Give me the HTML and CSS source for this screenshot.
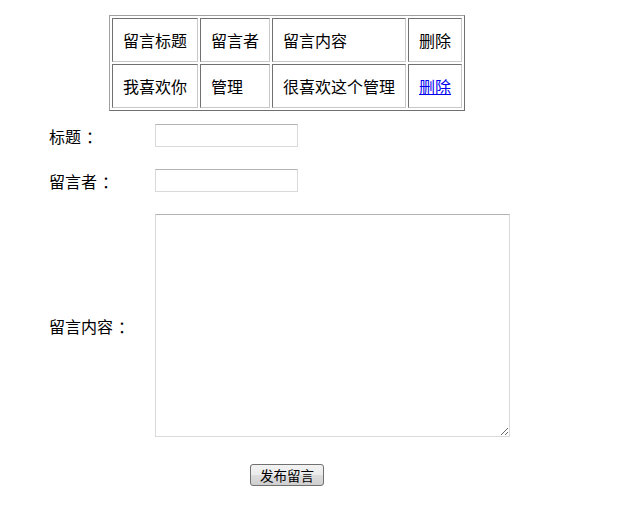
FILE: index.html
```
<!DOCTYPE html>
<html lang="zh-CN">
<head>
    <meta charset="UTF-8">
    <title>留言板</title>
    <link rel="stylesheet" href="styles.css">
</head>
<body>

<div class="board">
    <table class="msg-table">
        <tr>
            <td>留言标题</td>
            <td>留言者</td>
            <td>留言内容</td>
            <td>删除</td>
        </tr>
        <tr>
            <td>我喜欢你</td>
            <td>管理</td>
            <td>很喜欢这个管理</td>
            <td><a href="#">删除</a></td>
        </tr>
    </table>

    <form class="msg-form">
        <label class="field-label">标题<span class="colon">：</span></label>
        <input class="text-input" type="text">

        <label class="field-label">留言者<span class="colon">：</span></label>
        <input class="text-input" type="text">

        <label class="field-label">留言内容<span class="colon">：</span></label>
        <textarea class="text-area"></textarea>

        <div class="form-actions">
            <button class="submit-btn" type="button">发布留言</button>
        </div>
    </form>
</div>

</body>
</html>
```

FILE: styles.css
```
* {
    box-sizing: border-box;
}

body {
    margin: 0;
    background: #fff;
    color: #000;
    font-family: "Noto Sans CJK SC", "Microsoft YaHei", sans-serif;
    font-size: 16px;
}

.board {
    width: 476px;
    margin-left: 49px;
    padding-top: 15px;
}

.msg-table {
    margin: 0 auto;
    border-collapse: separate;
    border-spacing: 2px;
    border: 1px solid;
    border-color: #a0a0a0 #707070 #707070 #a0a0a0;
}

.msg-table td {
    padding: 10px;
    line-height: 22px;
    white-space: nowrap;
    border: 1px solid;
    border-color: #707070 #c8c8c8 #c8c8c8 #707070;
}

.msg-table a {
    color: #0000ee;
}

.msg-form {
    display: grid;
    grid-template-columns: 106px auto;
    align-items: center;
    row-gap: 22px;
    margin-top: 13px;
}

.field-label {
    line-height: 22px;
}

/* the SC colon hugs the left of its box; push it toward the middle */
.colon {
    padding-left: 5px;
}

.text-input {
    width: 143px;
    height: 23px;
    margin: 0;
    border: 1px solid #d9d9d9;
    border-top-color: #b4b4b4;
    font: inherit;
}

.text-area {
    width: 355px;
    height: 223px;
    margin: 0;
    border: 1px solid #d9d9d9;
    border-top-color: #b4b4b4;
    font: inherit;
    resize: both;
}

.form-actions {
    grid-column: 1 / -1;
    text-align: center;
    padding-top: 3px;
}

.submit-btn {
    width: 74px;
    height: 22px;
    padding: 0;
    border: 1px solid #707070;
    border-radius: 3px;
    background: linear-gradient(#f2f2f2, #ebebeb 50%, #dddddd 50%, #cfcfcf);
    color: #000;
    font-family: "Noto Sans CJK SC", sans-serif;
    font-size: 13.5px;
    line-height: 20px;
}
```
